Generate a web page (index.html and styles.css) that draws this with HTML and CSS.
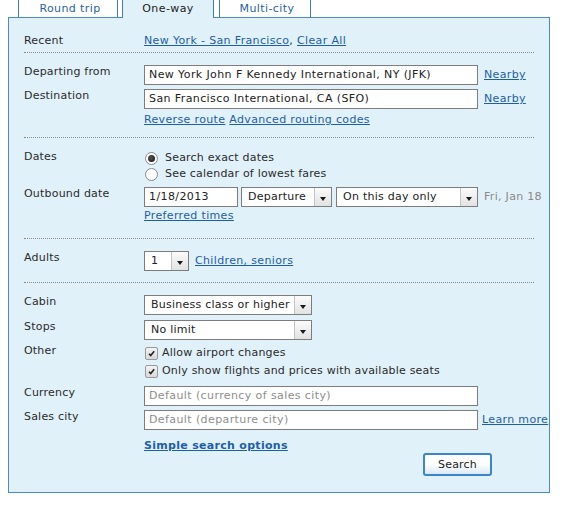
FILE: index.html
```html
<!DOCTYPE html>
<html>
<head>
<meta charset="utf-8">
<link rel="stylesheet" href="styles.css">
</head>
<body>
<div class="page">
  <div class="tabs">
    <div class="tab tab-rt">Round trip</div>
    <div class="tab tab-ow active">One-way</div>
    <div class="tab tab-mc">Multi-city</div>
  </div>
  <div class="panel">
    <div class="section s-recent">
      <div class="row">
        <div class="label">Recent</div>
        <div class="ctrl"><a class="link" href="#">New York - San Francisco</a>, <a class="link" href="#">Clear All</a></div>
      </div>
    </div>

    <div class="section s-route">
      <div class="row">
        <div class="label">Departing from</div>
        <div class="ctrl"><div class="input w-wide">New York John F Kennedy International, NY (JFK)</div><a class="link side" href="#">Nearby</a></div>
      </div>
      <div class="row gap4">
        <div class="label">Destination</div>
        <div class="ctrl"><div class="input w-wide">San Francisco International, CA (SFO)</div><a class="link side" href="#">Nearby</a></div>
      </div>
      <div class="row gap4">
        <div class="label"></div>
        <div class="ctrl"><a class="link" href="#">Reverse route</a> <a class="link" href="#">Advanced routing codes</a></div>
      </div>
    </div>

    <div class="section s-dates">
      <div class="row">
        <div class="label lradio">Dates</div>
        <div class="ctrl col">
          <div class="opt"><span class="radio on"></span>Search exact dates</div>
          <div class="opt"><span class="radio"></span>See calendar of lowest fares</div>
        </div>
      </div>
      <div class="row gap5">
        <div class="label">Outbound date</div>
        <div class="ctrl">
          <div class="input w-date">1/18/2013</div>
          <div class="select w-dep"><span class="sv">Departure</span><span class="arrow"></span></div>
          <div class="select w-day"><span class="sv">On this day only</span><span class="arrow"></span></div>
          <span class="hint">Fri, Jan 18</span>
        </div>
      </div>
      <div class="row gap2">
        <div class="label"></div>
        <div class="ctrl"><a class="link" href="#">Preferred times</a></div>
      </div>
    </div>

    <div class="section s-adults">
      <div class="row">
        <div class="label">Adults</div>
        <div class="ctrl">
          <div class="select w-num"><span class="sv">1</span><span class="arrow"></span></div>
          <a class="link side" href="#">Children, seniors</a>
        </div>
      </div>
    </div>

    <div class="section s-last">
      <div class="row">
        <div class="label">Cabin</div>
        <div class="ctrl"><div class="select w-cab"><span class="sv">Business class or higher</span><span class="arrow"></span></div></div>
      </div>
      <div class="row gap5">
        <div class="label">Stops</div>
        <div class="ctrl"><div class="select w-cab"><span class="sv">No limit</span><span class="arrow"></span></div></div>
      </div>
      <div class="row gap4">
        <div class="label lradio">Other</div>
        <div class="ctrl col">
          <div class="opt chk"><span class="check"><svg viewBox="0 0 9 9" width="9" height="9"><path d="M2 4.8 L3.7 6.5 L7.2 2.2" fill="none" stroke="#222" stroke-width="1.6"/></svg></span>Allow airport changes</div>
          <div class="opt chk"><span class="check"><svg viewBox="0 0 9 9" width="9" height="9"><path d="M2 4.8 L3.7 6.5 L7.2 2.2" fill="none" stroke="#222" stroke-width="1.6"/></svg></span>Only show flights and prices with available seats</div>
        </div>
      </div>
      <div class="row gap6">
        <div class="label">Currency</div>
        <div class="ctrl"><div class="input w-wide ph">Default (currency of sales city)</div></div>
      </div>
      <div class="row gap4">
        <div class="label">Sales city</div>
        <div class="ctrl"><div class="input w-wide ph">Default (departure city)</div><a class="link side2" href="#">Learn more</a></div>
      </div>
      <div class="row gap9">
        <div class="label"></div>
        <div class="ctrl"><a class="link bold" href="#">Simple search options</a></div>
      </div>
      <div class="btnrow">
        <div class="button">Search</div>
      </div>
    </div>
  </div>
</div>
</body>
</html>
```

FILE: styles.css
```css
html, body {
  margin: 0;
  padding: 0;
  background: #ffffff;
}
body {
  font-family: "DejaVu Sans", Verdana, sans-serif;
  font-size: 11px;
  line-height: 14px;
  color: #2b2b2b;
  letter-spacing: 0.2px;
}
.page {
  padding-left: 8px;
  width: 542px;
  overflow: hidden;
}
.tabs {
  display: flex;
  align-items: flex-end;
  height: 17px;
  padding-left: 10px;
}
.tab {
  box-sizing: border-box;
  height: 21px;
  margin-top: -4px;
  border: 1px solid #3f7fbf;
  border-bottom: none;
  border-radius: 4px 4px 0 0;
  background: #ffffff;
  color: #2a62a8;
  text-align: center;
  padding-top: 5px;
  letter-spacing: 0.4px;
}
.tab-rt { width: 100px; padding-left: 4px; }
.tab-ow { width: 92px; margin-left: 4px; }
.tab-mc { width: 92px; margin-left: 5px; padding-left: 4px; }
.tab.active {
  background: #e1f1f9;
  color: #222;
  height: 22px;
  margin-bottom: -1px;
  position: relative;
  z-index: 1;
}
.panel {
  border: 1px solid #4b8bca;
  background: #e1f1f9;
  padding: 0 15px 14px 15px;
  box-sizing: border-box;
  height: 476px;
}
.section {
  border-bottom: 1px dotted #8c8c8c;
}
.s-recent { padding-top: 16px; padding-bottom: 4px; }
.s-route { padding-top: 12px; padding-bottom: 10px; }
.s-dates { padding-top: 12px; padding-bottom: 15px; }
.s-adults { padding-top: 12px; padding-bottom: 11px; }
.s-last { padding-top: 12px; border-bottom: none; }

.row {
  display: grid;
  grid-template-columns: 120px auto;
  align-items: start;
}
.gap1 { margin-top: 1px; }
.gap2 { margin-top: 2px; }
.gap4 { margin-top: 4px; }
.gap5 { margin-top: 5px; }
.gap6 { margin-top: 6px; }
.gap9 { margin-top: 9px; }
.label { white-space: nowrap; }
.lradio { padding-top: 0; }
.ctrl {
  display: flex;
  align-items: center;
  white-space: nowrap;
}
.ctrl.col {
  flex-direction: column;
  align-items: flex-start;
}
.link {
  color: #1d5ea8;
  text-decoration: underline;
  letter-spacing: 0.35px;
}
.link + .link { margin-left: 4px; }
.bold { font-weight: bold; letter-spacing: 0.3px; }
.side { margin-left: 6px; }
.side2 { margin-left: 4px; }

.input {
  box-sizing: border-box;
  height: 20px;
  border: 1px solid #7d7d7d;
  background: #fff;
  padding: 2px 0 0 4px;
  color: #222;
  overflow: hidden;
  letter-spacing: 0.4px;
}
.input.ph { color: #8e8e8e; }
.w-wide { width: 334px; }
.w-date { width: 94px; }

.select {
  box-sizing: border-box;
  height: 20px;
  border: 1px solid #7d7d7d;
  background: #fff;
  display: flex;
  color: #222;
  letter-spacing: 0.25px;
}
.select .sv {
  flex: 1;
  padding: 2px 0 0 6px;
  overflow: hidden;
}
.select .arrow {
  width: 16px;
  border-left: 1px solid #c4c4c4;
  background: linear-gradient(#fbfbfb, #e2e2e2);
  position: relative;
}
.select .arrow::after {
  content: "";
  position: absolute;
  left: 5px;
  top: 9px;
  border-left: 3px solid transparent;
  border-right: 3px solid transparent;
  border-top: 4px solid #1a1a1a;
}
.w-dep { width: 91px; margin-left: 3px; }
.w-day { width: 142px; margin-left: 4px; }
.w-num { width: 45px; }
.w-cab { width: 168px; }
.hint { color: #8a8a8a; margin-left: 6px; letter-spacing: 0.3px; }

.opt {
  height: 16px;
  display: flex;
  align-items: center;
}
.chk { height: 18px; }
.radio {
  box-sizing: border-box;
  width: 13px;
  height: 13px;
  border: 1px solid #8a8a8a;
  border-radius: 50%;
  background: #fff;
  margin: 0 7px 0 1px;
  display: inline-flex;
  align-items: center;
  justify-content: center;
}
.radio.on::after {
  content: "";
  width: 7px;
  height: 7px;
  border-radius: 50%;
  background: radial-gradient(circle at 40% 40%, #555, #111);
}
.check {
  box-sizing: border-box;
  width: 13px;
  height: 13px;
  border: 1px solid #9a9a9a;
  border-radius: 2px;
  background: linear-gradient(#f4f4f4, #d8d8d8);
  margin: 0 4px 0 1px;
  display: inline-flex;
  align-items: center;
  justify-content: center;
}
.btnrow {
  margin-top: 0;
  padding-left: 399px;
}
.button {
  box-sizing: border-box;
  width: 69px;
  height: 23px;
  border: 2px solid #3b86c9;
  border-radius: 3px;
  background: linear-gradient(#ffffff, #ffffff 45%, #dbe9f6);
  color: #222;
  text-align: center;
  padding-top: 3px;
}
```
